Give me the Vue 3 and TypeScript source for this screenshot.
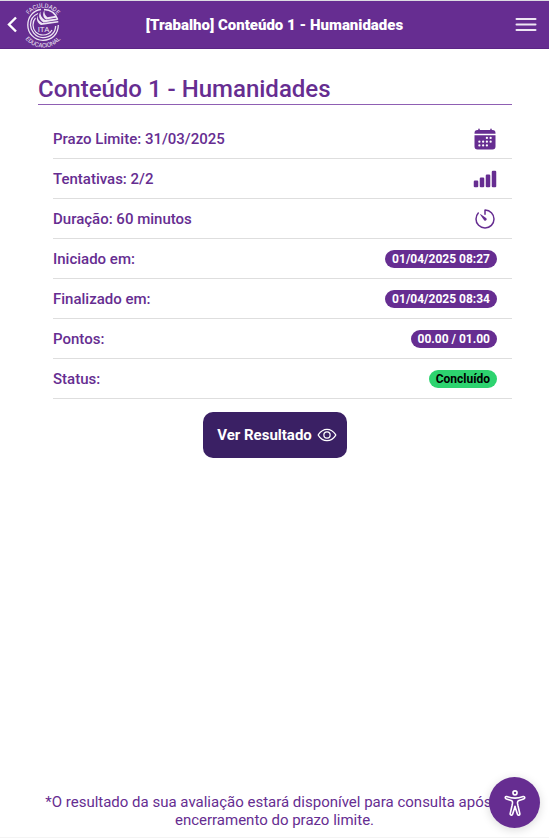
<script setup lang="ts">
interface Detail {
  label: string
  icon?: 'calendar' | 'bars' | 'timer'
  badge?: string
  done?: boolean
}

const title = 'Conteúdo 1 - Humanidades'

const details: Detail[] = [
  { label: 'Prazo Limite: 31/03/2025', icon: 'calendar' },
  { label: 'Tentativas: 2/2', icon: 'bars' },
  { label: 'Duração: 60 minutos', icon: 'timer' },
  { label: 'Iniciado em:', badge: '01/04/2025 08:27' },
  { label: 'Finalizado em:', badge: '01/04/2025 08:34' },
  { label: 'Pontos:', badge: '00.00 / 01.00' },
  { label: 'Status:', badge: 'Concluído', done: true },
]

const calendarDots: [number, number][] = [
  [296, 232], [376, 232],
  [136, 312], [216, 312], [296, 312], [376, 312],
  [136, 392], [216, 392], [296, 392],
]
</script>

<template>
  <div class="page">
    <header class="toolbar">
      <div class="start">
        <button class="back" type="button" aria-label="Voltar">
          <svg viewBox="0 0 12 20" width="12" height="20">
            <path d="M10 2.500 3 9.500l7 7" fill="none" stroke="currentColor" stroke-width="2.400" />
          </svg>
        </button>
        <svg class="logo" viewBox="0 0 40 48" width="40" height="48" role="img" aria-label="Faculdade Educacional ITA">
          <defs>
            <path id="arc-top" d="M2.500 24a17.500 17.500 0 0 1 35 0" />
            <path id="arc-bottom" d="M-2.500 24a22.500 22.500 0 0 0 45 0" />
          </defs>
          <g fill="none" stroke="currentColor">
            <path d="M18 8.500C10 9.500 4.800 16 4.800 24S11 39.300 20 39.300 35.300 33 35.300 24" stroke-width="1.300" />
            <path d="M15 12.500C10 14.500 7.500 19 7.500 24S12 36.600 20 36.600 32.600 31 32.600 25" stroke-width="1.300" />
            <path d="M12.500 17c-2 2-2.500 4.500-2.500 7 0 5.500 4 10 10 10 4 0 7-1.500 9-5" stroke-width="1.200" />
            <path d="M21 8.500c6.500.3 11.500 4 13.700 10" stroke-width="1.500" />
          </g>
          <g fill="currentColor">
            <path d="M21.500 9c-2 3-2 7 1.500 9.500l11-2-1-1.800-8.500 1.500c-2.500-1.700-3.500-4-3-7.200z" />
            <path d="M17.500 10.500c-2.500 4-1.500 8 3 11l14.500-2.500-.4-1.600-12.600 1.600c-3.500-2-5-5-4.500-8.500z" />
            <path d="M14.500 14.500c-1.500 4 0 7.500 3.500 9.500l17.300-2.500v-1.500l-16 2c-3.300-1.800-4.900-4-4.800-7.500z" />
          </g>
          <text class="ita" x="20.500" y="31" text-anchor="middle">ITA</text>
          <text class="ring"><textPath href="#arc-top" startOffset="50%" text-anchor="middle">FACULDADE</textPath></text>
          <text class="ring"><textPath href="#arc-bottom" startOffset="50%" text-anchor="middle">EDUCACIONAL</textPath></text>
        </svg>
      </div>
      <h1 class="bar-title">[Trabalho] {{ title }}</h1>
      <button class="menu" type="button" aria-label="Menu">
        <svg viewBox="0 0 22 16" width="22" height="16">
          <path d="M1.500 2h19M1.500 7.500h19M1.500 13h19" stroke="currentColor" stroke-width="2" stroke-linecap="round" />
        </svg>
      </button>
    </header>

    <main class="content">
      <h2 class="heading">{{ title }}</h2>
      <ul class="details">
        <li v-for="item in details" :key="item.label" class="row">
          <span>{{ item.label }}</span>
          <svg v-if="item.icon === 'calendar'" class="icon" viewBox="0 0 512 512">
            <path fill="currentColor" d="M480 128a64 64 0 0 0-64-64h-16V48a16 16 0 0 0-32 0v16H144V48a16 16 0 0 0-32 0v16H96a64 64 0 0 0-64 64v12a4 4 0 0 0 4 4h440a4 4 0 0 0 4-4zM32 176v240a64 64 0 0 0 64 64h320a64 64 0 0 0 64-64V176z" />
            <circle v-for="([x, y], i) in calendarDots" :key="i" :cx="x" :cy="y" r="24" fill="#fff" />
          </svg>
          <svg v-else-if="item.icon === 'bars'" class="icon" viewBox="0 0 512 512">
            <g fill="currentColor">
              <rect x="16" y="288" width="96" height="144" rx="24" />
              <rect x="144" y="224" width="96" height="208" rx="24" />
              <rect x="272" y="160" width="96" height="272" rx="24" />
              <rect x="400" y="80" width="96" height="352" rx="24" />
            </g>
          </svg>
          <svg v-else-if="item.icon === 'timer'" class="icon" viewBox="0 0 512 512">
            <path fill="none" stroke="currentColor" stroke-width="32" stroke-linecap="round" stroke-linejoin="round" d="M112.910 128A191.850 191.850 0 0 0 64 254c-1.180 106.350 85.650 193.800 192 194 106.200.2 192-85.830 192-192 0-104.540-83.550-189.610-187.500-192a4.360 4.360 0 0 0-4.500 4.370V152" />
            <path fill="currentColor" d="M233.380 278.630l-79-113a8.130 8.130 0 0 1 11.320-11.320l113 79a32.500 32.500 0 0 1-37.250 53.260 33.210 33.210 0 0 1-8.070-7.940z" />
          </svg>
          <span v-else class="badge" :class="{ done: item.done }">{{ item.badge }}</span>
        </li>
      </ul>
      <button class="result" type="button">
        Ver Resultado
        <svg viewBox="0 0 512 512" width="20" height="20">
          <g fill="none" stroke="currentColor" stroke-width="32" stroke-linejoin="round">
            <path d="M255.660 112c-77.940 0-157.890 45.110-220.830 135.330a16 16 0 0 0-.27 17.770C82.920 340.800 161.800 400 255.660 400c92.840 0 173.340-59.380 221.790-135.250a16.140 16.140 0 0 0 0-17.470C428.890 172.280 347.800 112 255.660 112z" />
            <circle cx="256" cy="256" r="80" />
          </g>
        </svg>
      </button>
    </main>

    <footer class="note">
      *O resultado da sua avaliação estará disponível para consulta após o encerramento do prazo limite.
    </footer>

    <button class="fab" type="button" aria-label="Acessibilidade">
      <svg viewBox="0 0 512 512" width="26" height="26">
        <g fill="none" stroke="currentColor" stroke-width="32" stroke-linejoin="round">
          <circle cx="256" cy="56" r="40" />
          <path d="M204.230 274.440c2.900-18.060 4.200-35.520-.5-47.590-4-10.380-12.700-16.190-23.200-20.150L88 176.760c-12-4-23.210-10.700-24-23.940-1-17 14-28 29-24 0 0 88 31.140 163 31.140s162-31 162-31c18-5 30 9 30 23.790 0 14.210-11 19.210-24 23.940l-88 31.910c-8 3-21 9-26 18.180-6 10.750-5 29.530-2.100 47.590l5.900 29.630 37.410 163.900c2.800 13.150-6.300 25.440-19.400 27.740S308 489 304.120 476.280l-37.560-115.930q-2.710-8.340-4.800-16.870L256 320l-5.300 21.650q-2.520 10.350-5.800 20.480L208 476.180c-4 12.850-14.500 21.750-27.600 19.460s-22.400-15.590-19.460-27.740l37.390-163.830z" />
        </g>
      </svg>
    </button>
  </div>
</template>

<style>
body {
  background: #fff;
}
</style>

<style scoped>
.page {
  box-sizing: border-box;
  min-height: 100vh;
  display: flex;
  flex-direction: column;
  border-top: 1px solid #dcdce2;
  border-bottom: 1px solid #f4f4f4;
  font-family: Roboto, sans-serif;
  color: #662d91;
}

button {
  font: inherit;
  border: 0;
  padding: 0;
  background: none;
  color: inherit;
  cursor: pointer;
}

svg {
  display: block;
}

.toolbar {
  display: grid;
  grid-template-columns: 1fr auto 1fr;
  align-items: center;
  height: 48px;
  box-sizing: border-box;
  padding: 0 6px;
  background: #662d91;
  border-bottom: 1px solid #5b2585;
  color: #fff;
}

.start {
  display: flex;
  align-items: center;
  gap: 5px;
}

.logo {
  overflow: visible;
  color: #eee6f4;
}

.ita {
  font-size: 8px;
  fill: currentColor;
}

.ring {
  font-size: 6px;
  fill: currentColor;
}

.bar-title {
  margin: 0;
  font-size: 15px;
  font-weight: 900;
  line-height: 20px;
}

.menu {
  justify-self: end;
  padding-right: 6px;
  color: #eee6f4;
}

.content {
  flex: 1;
  display: flex;
  flex-direction: column;
  padding: 25px 37px 0 38px;
}

.heading {
  margin: 0;
  border-bottom: 1px solid #8f5fb3;
  font-size: 24px;
  font-weight: 500;
  line-height: 30px;
}

.details {
  list-style: none;
  margin: 14px 0 0 15px;
  padding: 0;
}

.row {
  display: flex;
  align-items: center;
  justify-content: space-between;
  box-sizing: border-box;
  height: 40px;
  padding-right: 15px;
  border-bottom: 1px solid #dedede;
  font-size: 15px;
  font-weight: 500;
}

.icon {
  width: 24px;
  height: 24px;
}

.badge {
  padding: 2px 7px;
  border-radius: 9px;
  background: #662d91;
  color: #fff;
  font-size: 12px;
  font-weight: 700;
  line-height: 14px;
}

.badge.done {
  background: #2dd36f;
  color: #000;
}

.result {
  align-self: center;
  display: flex;
  align-items: center;
  gap: 5px;
  height: 46px;
  margin-top: 13px;
  padding: 0 10px 0 14px;
  border-radius: 10px;
  background: #3a2064;
  color: #fff;
  font-size: 15px;
  font-weight: 700;
}

.note {
  padding: 0 38px 8px;
  font-size: 15px;
  line-height: 18px;
  text-align: center;
}

.fab {
  position: fixed;
  right: 9px;
  bottom: 10px;
  display: grid;
  place-items: center;
  width: 51px;
  height: 51px;
  border-radius: 50%;
  background: #662d91;
  color: #fff;
  box-shadow: 0 2px 10px rgba(0, 0, 0, 0.15);
}
</style>
